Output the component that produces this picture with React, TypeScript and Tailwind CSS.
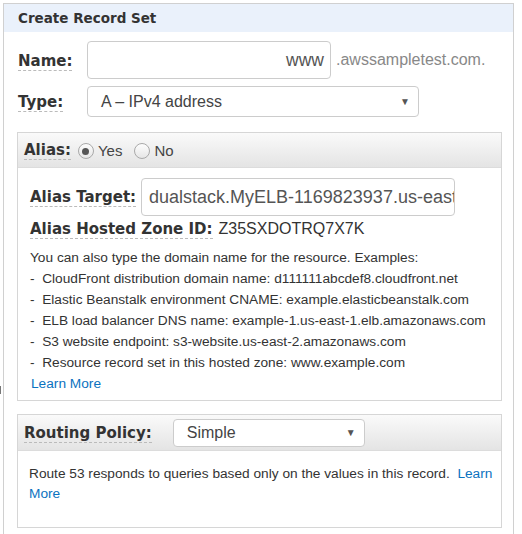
import React from 'react';

const labelFont = { fontFamily: '"DejaVu Sans", Verdana, sans-serif' };
const bodyFont = { fontFamily: '"Liberation Sans", Arial, sans-serif' };

const Label: React.FC<{ children: React.ReactNode; className?: string }> = ({ children, className = '' }) => (
  <span
    className={`font-bold text-[15px] text-[#333] border-b border-dashed border-[#bbb] leading-[17px] ${className}`}
    style={labelFont}
  >
    {children}
  </span>
);

const Arrow: React.FC = () => <span className="text-[10px] text-[#555]">▼</span>;

const Radio: React.FC<{ checked?: boolean }> = ({ checked }) => (
  <span className="w-[16px] h-[16px] rounded-full border border-[#a9a9a9] bg-gradient-to-b from-[#fdfdfd] to-[#e6e6e6] flex items-center justify-center">
    {checked && <span className="w-[7px] h-[7px] rounded-full bg-[#555]" />}
  </span>
);

const examples = [
  'CloudFront distribution domain name: d111111abcdef8.cloudfront.net',
  'Elastic Beanstalk environment CNAME: example.elasticbeanstalk.com',
  'ELB load balancer DNS name: example-1.us-east-1.elb.amazonaws.com',
  'S3 website endpoint: s3-website.us-east-2.amazonaws.com',
  'Resource record set in this hosted zone: www.example.com',
];

export default function App() {
  return (
    <div className="w-[522px] h-[534px] bg-white overflow-hidden relative" style={bodyFont}>
      <div className="absolute left-0 top-[386px] w-px h-[8px] bg-[#777]" />
      <div className="ml-[3px] mt-[3px] w-[511px] h-[540px] border border-[#d0d0d0]">
        <div className="h-[28px] bg-[#eaf1fb] flex items-center pl-[14px]">
          <span className="font-bold text-[13.5px] text-[#333]" style={labelFont}>Create Record Set</span>
        </div>

        <div className="pl-[13px] pt-[9px]">
          <div className="flex items-center h-[38px]">
            <div className="w-[70px] pl-px pt-px">
              <Label>Name:</Label>
            </div>
            <div className="w-[244px] h-[38px] border border-[#ccc] rounded-[4px] flex items-center justify-end pr-[6px] text-[17.5px] text-[#555]">
              www
            </div>
            <span className="ml-[5px] text-[16px] text-[#888]">.awssampletest.com.</span>
          </div>

          <div className="flex items-center h-[31px] mt-[7px]">
            <div className="w-[70px] pl-px">
              <Label>Type:</Label>
            </div>
            <div className="w-[332px] h-[31px] border border-[#ccc] rounded-[4px] flex items-center justify-between pl-[13px] pr-[8px] text-[16px] text-[#444]">
              <span>A – IPv4 address</span>
              <Arrow />
            </div>
          </div>

          <div className="mt-[15px] w-[485px] h-[269px] border border-[#d6d6d6]">
            <div className="h-[35px] bg-gradient-to-b from-[#fafafa] to-[#e4e4e4] border-b border-[#dcdcdc] flex items-center pl-[6px] pt-[2px]">
              <Label>Alias:</Label>
              <span className="ml-[7px] flex items-center gap-[4px]">
                <Radio checked />
                <span className="text-[15px] text-[#444]">Yes</span>
              </span>
              <span className="ml-[12px] flex items-center gap-[4px]">
                <Radio />
                <span className="text-[15px] text-[#444]">No</span>
              </span>
            </div>

            <div className="pl-[12px] pt-[10px]">
              <div className="flex items-center h-[38px]">
                <Label className="mt-[2px]">Alias Target:</Label>
                <div className="ml-[5px] w-[314px] h-[38px] border border-[#ccc] rounded-[4px] flex items-center pl-[7px] overflow-hidden whitespace-nowrap text-[18px] text-[#555]">
                  dualstack.MyELB-1169823937.us-east-1.elb.amazonaws.com
                </div>
              </div>
              <div className="flex items-center h-[24px] mt-px">
                <Label className="mt-[2px]">Alias Hosted Zone ID:</Label>
                <span className="ml-[6px] text-[16px] text-[#333]">Z35SXDOTRQ7X7K</span>
              </div>
              <div className="mt-[6px] text-[13.7px] leading-[21px] text-[#333]">
                <div>You can also type the domain name for the resource. Examples:</div>
                {examples.map((e) => (
                  <div key={e} className="whitespace-pre">{'-  ' + e}</div>
                ))}
                <a className="text-[#0b72c0] pl-px">Learn More</a>
              </div>
            </div>
          </div>

          <div className="mt-[13px] w-[485px] h-[114px] border border-[#d6d6d6]">
            <div className="h-[36px] bg-gradient-to-b from-[#fafafa] to-[#e4e4e4] border-b border-[#dcdcdc] flex items-center pl-[6px]">
              <Label className="mt-[2px]">Routing Policy:</Label>
              <div className="ml-[21px] w-[192px] h-[28px] bg-white border border-[#ccc] rounded-[4px] flex items-center justify-between pl-[13px] pr-[8px] text-[16px] text-[#444]">
                <span>Simple</span>
                <Arrow />
              </div>
            </div>
            <div className="pl-[11px] pr-[6px] pt-[13px] text-[13.7px] leading-[20px] text-[#333]">
              Route 53 responds to queries based only on the values in this record.{'\u00a0 '}
              <a className="text-[#0b72c0]">Learn More</a>
            </div>
          </div>
        </div>
      </div>
    </div>
  );
}
